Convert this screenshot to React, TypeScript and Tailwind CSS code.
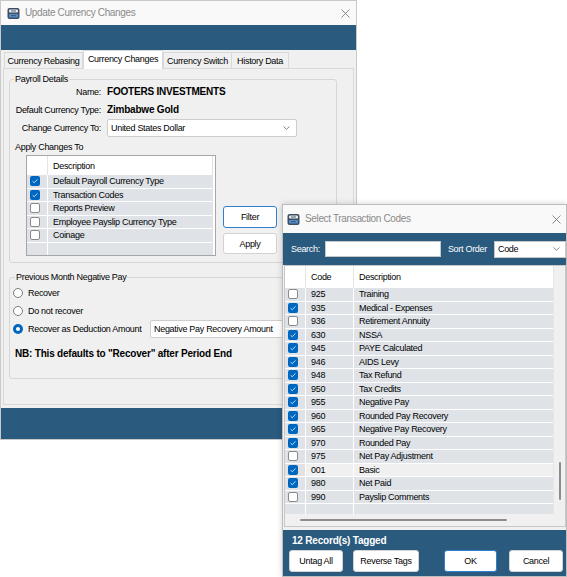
import React from 'react';

type CodeRow = { code: string; desc: string; on: boolean; sel?: boolean };

const codes: CodeRow[] = [
  { code: '925', desc: 'Training', on: false },
  { code: '935', desc: 'Medical - Expenses', on: true },
  { code: '936', desc: 'Retirement Annuity', on: false },
  { code: '630', desc: 'NSSA', on: true },
  { code: '945', desc: 'PAYE Calculated', on: true },
  { code: '946', desc: 'AIDS Levy', on: true },
  { code: '948', desc: 'Tax Refund', on: true },
  { code: '950', desc: 'Tax Credits', on: true },
  { code: '955', desc: 'Negative Pay', on: true },
  { code: '960', desc: 'Rounded Pay Recovery', on: true },
  { code: '965', desc: 'Negative Pay Recovery', on: true },
  { code: '970', desc: 'Rounded Pay', on: true },
  { code: '975', desc: 'Net Pay Adjustment', on: false },
  { code: '001', desc: 'Basic', on: true, sel: true },
  { code: '980', desc: 'Net Paid', on: true },
  { code: '990', desc: 'Payslip Comments', on: false },
];

const applyTo = [
  { label: 'Default Payroll Currency Type', on: true },
  { label: 'Transaction Codes', on: true },
  { label: 'Reports Preview', on: false },
  { label: 'Employee Payslip Currency Type', on: false },
  { label: 'Coinage', on: false },
];

const Check = ({ on }: { on: boolean }) =>
  on ? (
    <span className="flex items-center justify-center w-[10px] h-[10px] rounded-[2px] bg-[#0067c0]">
      <svg width="8" height="8" viewBox="0 0 8 8">
        <path d="M1.6 4.2 3.2 5.7 6.5 2.4" fill="none" stroke="#dbe9f7" strokeWidth="0.9" />
      </svg>
    </span>
  ) : (
    <span className="block w-[10px] h-[10px] rounded-[2px] bg-white border border-[#8a8a8a]" />
  );

const AppIcon = () => (
  <svg width="13" height="13" viewBox="0 0 13 13">
    <rect x="0.5" y="1" width="12" height="11" rx="2" fill="#3f4d5e" />
    <rect x="2" y="2.5" width="9" height="3" rx="1" fill="#e8eef4" />
    <rect x="2" y="7" width="9" height="3.5" rx="1" fill="#4f8fd0" />
    <path d="M4 4h5M4 8.7h5" stroke="#3f4d5e" strokeWidth="0.9" />
  </svg>
);

const CloseX = () => (
  <svg width="9" height="9" viewBox="0 0 9 9" className="ml-auto">
    <path d="M0.5 0.5 8.5 8.5M8.5 0.5 0.5 8.5" stroke="#6e6e6e" strokeWidth="0.8" />
  </svg>
);

const Chevron = () => (
  <svg width="7" height="4" viewBox="0 0 7 4" className="ml-auto">
    <path d="M0.5 0.5 3.5 3.3 6.5 0.5" fill="none" stroke="#6a6a6a" strokeWidth="0.8" />
  </svg>
);

const Btn = ({ label, w, focus }: { label: string; w: string; focus?: boolean }) => (
  <div
    className={`flex items-center justify-center h-full rounded-[3px] bg-white border ${w} ${
      focus ? 'border-[#2f7fcf]' : 'border-[#d2d2d2]'
    }`}
  >
    {label}
  </div>
);

function MainWindow() {
  return (
    <div className="flex flex-col w-[357px] h-[440px] border border-[#c9c9c9] bg-[#f0f0f0]">
      {/* title bar */}
      <div className="flex items-center h-[24px] shrink-0 bg-[#f9f9f9] pl-[6px] pr-[6px]">
        <AppIcon />
        <span className="ml-[5px] text-[10px] tracking-[-0.35px] text-[#8a8a8a]">Update Currency Changes</span>
        <CloseX />
      </div>
      <div className="h-[25px] shrink-0 bg-[#2a5a7e]" />

      {/* tabs */}
      <div className="flex items-end h-[18px] shrink-0 pl-[3px]">
        <div className="flex items-center justify-center w-[79px] h-[16px] border border-b-0 border-[#d9d9d9]">Currency Rebasing</div>
        <div className="relative z-10 -mb-px flex items-center justify-center w-[80px] h-[19px] pb-[2px] bg-white border border-b-0 border-[#d9d9d9]">
          Currency Changes
        </div>
        <div className="flex items-center justify-center w-[69px] h-[16px] border border-b-0 border-[#d9d9d9]">Currency Switch</div>
        <div className="flex items-center justify-center w-[57px] h-[16px] border border-b-0 border-l-0 border-[#d9d9d9]">History Data</div>
      </div>

      {/* tab page */}
      <div className="h-[337px] shrink-0 mx-[2px] border border-[#d9d9d9] bg-[#f0f0f0] px-[5px] pt-[10px]">
        {/* Payroll Details */}
        <div className="relative w-[328px] h-[184px] border border-[#d6d6d6] rounded-[3px] pt-[6px]">
          <span className="absolute -top-[7px] left-[4px] px-[1px] bg-[#f0f0f0]">Payroll Details</span>
          <div className="flex items-center h-[12px]">
            <span className="w-[91px] text-right">Name:</span>
            <span className="ml-[6px] font-bold text-[10px] tracking-[-0.2px]">FOOTERS INVESTMENTS</span>
          </div>
          <div className="flex items-center h-[12px] mt-[6px]">
            <span className="w-[91px] text-right">Default Currency Type:</span>
            <span className="ml-[6px] font-bold text-[10px] tracking-[-0.2px]">Zimbabwe Gold</span>
          </div>
          <div className="flex items-center h-[18px] mt-[3px]">
            <span className="w-[91px] text-right">Change Currency To:</span>
            <div className="ml-[6px] flex items-center w-[190px] h-[18px] bg-white border border-[#cdcdcd] rounded-[2px] pl-[3px] pr-[6px]">
              United States Dollar
              <Chevron />
            </div>
          </div>
          <div className="flex items-center h-[12px] mt-[4px] pl-[5px]">Apply Changes To</div>
          <div className="flex mt-[2px] pl-[16px]">
            <div className="flex flex-col w-[190px] h-[101px] border border-[#a6a6a6] bg-white">
              <div className="flex flex-col w-[186px] h-full border-r border-[#e2e2e2]">
                <div className="flex h-[19px] shrink-0">
                  <div className="w-[21px] border-r border-[#e4e4e4]" />
                  <div className="flex items-center pl-[5px]">Description</div>
                </div>
                {applyTo.map((r) => (
                  <div key={r.label} className="flex h-[13.5px] shrink-0 bg-[#dfe3e8] border-b border-white">
                    <div className="flex items-center w-[21px] pl-[3px] border-r border-white">
                      <Check on={r.on} />
                    </div>
                    <div className="flex items-center pl-[5px]">{r.label}</div>
                  </div>
                ))}
                <div className="flex flex-1 bg-[#dfe3e8]">
                  <div className="w-[21px] border-r border-white" />
                </div>
              </div>
            </div>
            <div className="flex flex-col ml-[7px] pt-[51px]">
              <div className="h-[22px]">
                <Btn label="Filter" w="w-[54px]" focus />
              </div>
              <div className="h-[21px] mt-[5px]">
                <Btn label="Apply" w="w-[54px]" />
              </div>
            </div>
          </div>
        </div>

        {/* Previous Month Negative Pay */}
        <div className="relative mt-[14px] w-[328px] h-[102px] border border-[#d6d6d6] rounded-[3px] pt-[9px]">
          <span className="absolute -top-[7px] left-[5px] px-[1px] bg-[#f0f0f0]">Previous Month Negative Pay</span>
          <div className="flex items-center h-[12px] pl-[3px]">
            <span className="w-[10px] h-[10px] rounded-full border border-[#7c7c7c] bg-white" />
            <span className="ml-[5px]">Recover</span>
          </div>
          <div className="flex items-center h-[12px] mt-[6px] pl-[3px]">
            <span className="w-[10px] h-[10px] rounded-full border border-[#7c7c7c] bg-white" />
            <span className="ml-[5px]">Do not recover</span>
          </div>
          <div className="flex items-center h-[18px] mt-[3px] pl-[3px]">
            <span className="flex items-center justify-center w-[10px] h-[10px] rounded-full bg-[#0067c0]">
              <span className="w-[4px] h-[4px] rounded-full bg-white" />
            </span>
            <span className="ml-[5px] w-[122px]">Recover as Deduction Amount</span>
            <div className="flex items-center w-[180px] h-[18px] bg-white border border-[#cdcdcd] rounded-[2px] pl-[3px]">
              Negative Pay Recovery Amount
            </div>
          </div>
          <div className="flex items-center h-[12px] mt-[10px] pl-[5px] font-bold text-[10px] tracking-[-0.2px]">
            NB: This defaults to "Recover" after Period End
          </div>
        </div>
      </div>

      <div className="mt-[3px] h-[31px] shrink-0 bg-[#2a5a7e]" />
    </div>
  );
}

function CodesDialog() {
  return (
    <div className="absolute left-[282px] top-[204px] flex flex-col w-[285px] h-[373px] bg-[#f0f0f0] border border-[#bdbdbd] shadow-[0_0_6px_rgba(0,0,0,0.18)]">
      <div className="flex items-center h-[28px] shrink-0 bg-[#f9f9f9] pl-[4px] pr-[5px]">
        <AppIcon />
        <span className="ml-[5px] text-[10px] tracking-[-0.35px] text-[#8a8a8a]">Select Transaction Codes</span>
        <CloseX />
      </div>

      <div className="flex items-center h-[32px] shrink-0 bg-[#2a5a7e] pl-[8px] text-white">
        <span>Search:</span>
        <div className="ml-[5px] w-[116px] h-[16px] bg-white border border-[#c8c8c8]" />
        <span className="ml-[7px]">Sort Order</span>
        <div className="ml-[7px] flex items-center w-[72px] h-[17px] bg-white border border-[#c8c8c8] pl-[3px] pr-[5px] text-black">
          Code
          <Chevron />
        </div>
      </div>

      {/* grid */}
      <div className="flex flex-col ml-[1px] w-[282px] h-[262px] shrink-0 border border-[#c8c8c8] bg-[#f0f0f0]">
        <div className="flex h-[248px] shrink-0">
          <div className="flex flex-col w-[268px]">
            <div className="flex h-[22px] shrink-0 bg-white">
              <div className="w-[21px] border-r border-[#e4e4e4]" />
              <div className="flex items-center w-[48px] pl-[5px] border-r border-[#e4e4e4]">Code</div>
              <div className="flex items-center pl-[5px]">Description</div>
            </div>
            {codes.map((r) => (
              <div
                key={r.code}
                className={`flex h-[13.5px] shrink-0 border-b border-white ${r.sel ? 'bg-[#f0f0f0]' : 'bg-[#dfe3e8]'}`}
              >
                <div className={`flex items-center w-[21px] pl-[3px] border-r border-white ${r.sel ? 'bg-[#e2e2e2]' : ''}`}>
                  <Check on={r.on} />
                </div>
                <div className="flex items-center w-[48px] pl-[5px] border-r border-white">{r.code}</div>
                <div className="flex items-center pl-[5px]">{r.desc}</div>
              </div>
            ))}
            <div className="flex flex-1 bg-[#dfe3e8]">
              <div className="w-[21px] border-r border-white" />
              <div className="w-[48px] border-r border-white" />
            </div>
          </div>
          <div className="flex flex-col flex-1 border-l border-[#e6e6e6]">
            <div className="ml-[5px] mt-[196px] w-[2px] h-[38px] rounded-full bg-[#8c8c8c]" />
          </div>
        </div>
        <div className="flex items-center h-[12px] shrink-0">
          <div className="ml-[15px] w-[207px] h-[2px] rounded-full bg-[#8c8c8c]" />
        </div>
      </div>

      {/* footer */}
      <div className="flex flex-col flex-1 mt-[3px] bg-[#2a5a7e] pl-[6px]">
        <div className="flex items-center h-[12px] mt-[5px] ml-[3px] font-bold text-[10px] tracking-[-0.2px] text-white">
          12 Record(s) Tagged
        </div>
        <div className="flex h-[22px] mt-[3px]">
          <Btn label="Untag All" w="w-[54px]" />
          <div className="ml-[10px] h-full">
            <Btn label="Reverse Tags" w="w-[66px]" />
          </div>
          <div className="ml-[25px] h-full">
            <Btn label="OK" w="w-[53px]" focus />
          </div>
          <div className="ml-[12px] h-full">
            <Btn label="Cancel" w="w-[54px]" />
          </div>
        </div>
      </div>
    </div>
  );
}

export default function App() {
  return (
    <div className="relative w-[567px] h-[577px] overflow-hidden bg-white font-['Liberation_Sans',Arial,sans-serif] text-[9px] leading-[12px] tracking-[-0.3px] text-black">
      <MainWindow />
      <CodesDialog />
    </div>
  );
}
